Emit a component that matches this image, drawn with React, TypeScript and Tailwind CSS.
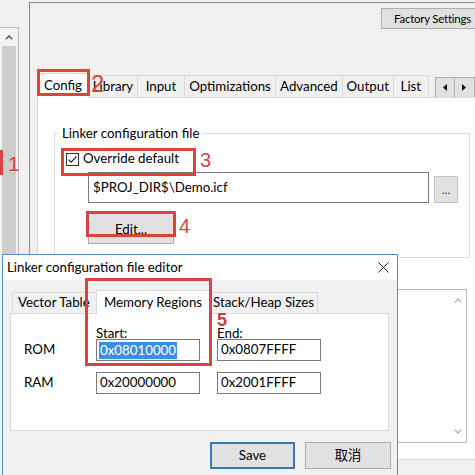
import React from "react";

const Chevron = ({ dir, color = "#606060" }: { dir: "up" | "down"; color?: string }) => (
  <svg width="8" height="5" viewBox="0 0 8 5">
    <path
      d={dir === "up" ? "M0.8 4.3 L4 1 L7.2 4.3" : "M0.8 0.7 L4 4 L7.2 0.7"}
      fill="none"
      stroke={color}
      strokeWidth="1.3"
    />
  </svg>
);

const Tri = ({ dir }: { dir: "left" | "right" }) => (
  <svg width="4" height="7" viewBox="0 0 4 7">
    <path d={dir === "left" ? "M4 0 L0 3.5 L4 7 Z" : "M0 0 L4 3.5 L0 7 Z"} fill="#111" />
  </svg>
);

export default function App() {
  const mainTabs: { label: string; w: string; sel?: boolean }[] = [
    { label: "Config", w: "w-[53px]", sel: true },
    { label: "Library", w: "w-[50px]" },
    { label: "Input", w: "w-[48px]" },
    { label: "Optimizations", w: "w-[93px]" },
    { label: "Advanced", w: "w-[68px]" },
    { label: "Output", w: "w-[52px]" },
    { label: "List", w: "w-[36px]" },
  ];

  return (
    <div className="relative w-[475px] h-[475px] overflow-hidden bg-[#f0f0f0] text-black font-['Lato','Noto_Sans_CJK_SC',sans-serif] text-[13.3px]">
      <div className="flex h-full">
        {/* left strip */}
        <div className="w-[19px] pt-[27px] flex flex-col shrink-0">
          <div className="flex-1 border-t border-r border-[#bdbdbd] flex flex-col bg-[#f3f3f3]">
            <div className="h-[18px] flex items-center justify-center">
              <Chevron dir="up" color="#505050" />
            </div>
            <div className="flex-1 mx-[2px] bg-[#cdcdcd]" />
          </div>
        </div>
        <div className="w-[10px] shrink-0" />
        {/* main window */}
        <div className="flex-1 mt-[2px] border-l border-t border-[#8a8a8a] flex flex-col min-w-0 overflow-hidden">
          <div className="h-[69px] flex justify-end items-start pt-[5px]">
            <div className="w-[100px] -mr-[6px] h-[21px] bg-[#e1e1e1] border border-[#adadad] text-[11.4px] leading-[19px] pl-[12px] whitespace-nowrap tracking-[-0.2px]">
              Factory Settings
            </div>
          </div>
          {/* tab row */}
          <div className="flex items-end pl-[7px] h-[25px]">
            {mainTabs.map((t) =>
              t.sel ? (
                <div
                  key={t.label}
                  className={`${t.w} h-[25px] bg-white border-l border-t border-r border-[#d9d9d9] -mb-[1px] relative z-10 flex items-center justify-center`}
                >
                  {t.label}
                </div>
              ) : (
                <div
                  key={t.label}
                  className={`${t.w} h-[22px] bg-[#f0f0f0] border-t border-r border-[#d9d9d9] flex items-center justify-center`}
                >
                  {t.label}
                </div>
              )
            )}
            <div className="flex ml-[6px] mb-[-1px]">
              <div className="w-[20px] h-[21px] bg-[#e1e1e1] border border-[#adadad] flex items-center justify-center">
                <Tri dir="left" />
              </div>
              <div className="w-[20px] h-[21px] bg-[#e1e1e1] border border-[#adadad] border-l-0 flex items-center justify-center">
                <Tri dir="right" />
              </div>
            </div>
          </div>
          {/* tab panel */}
          <div className="ml-[7px] h-[363px] bg-white border-l border-t border-b border-[#d9d9d9] pl-[16px] pt-[27px] flex flex-col">
            <fieldset className="w-[413px] h-[133px] border border-[#dcdcdc] px-[11px] pb-0 pt-0">
              <legend className="ml-[-7px] px-[3px] leading-[17px]">Linker configuration file</legend>
              <div className="flex items-center h-[16px] mt-[9px]">
                <svg width="13" height="13" viewBox="0 0 13 13" className="shrink-0">
                  <rect x="0.5" y="0.5" width="12" height="12" fill="#fff" stroke="#333" />
                  <path d="M2.6 6.6 L5.2 9.2 L10.4 3.4" fill="none" stroke="#222" strokeWidth="1.2" />
                </svg>
                <span className="ml-[4px]">Override default</span>
              </div>
              <div className="flex items-start mt-[5px] ml-[22px]">
                <div className="w-[341px] h-[31px] border border-[#7a7a7a] flex items-center pl-[4px]">
                  $PROJ_DIR$\Demo.icf
                </div>
                <div className="ml-[5px] mt-[4px] w-[24px] h-[27px] bg-[#e1e1e1] border border-[#c4c4c4] flex items-center justify-center text-[12px] text-[#333]">
                  ...
                </div>
              </div>
              <div className="ml-[22px] mt-[10px] w-[86px] h-[31px] bg-[#e1e1e1] border border-[#adadad] flex items-center justify-center pt-[3px]">
                Edit...
              </div>
            </fieldset>
            <div className="mt-[31px] w-[413px] h-[154px] border border-[#bcbcbc] flex justify-end">
              <div className="w-[17px] flex flex-col items-center justify-between py-[8px]">
                <Chevron dir="up" color="#b0b0b0" />
                <Chevron dir="down" color="#b0b0b0" />
              </div>
            </div>
          </div>
        </div>
      </div>

      {/* dialog window */}
      <div className="absolute left-[2px] top-[254px] w-[396px] h-[240px] border border-[#5a8dbb] bg-[#f0f0f0] flex flex-col z-20">
        <div className="h-[25px] bg-white flex items-center justify-between pl-[4px] pr-[8px] shrink-0">
          <span className="text-[13.3px]">Linker configuration file editor</span>
          <svg width="11" height="11" viewBox="0 0 11 11">
            <path d="M0.5 0.5 L10.5 10.5 M10.5 0.5 L0.5 10.5" stroke="#222" strokeWidth="1" />
          </svg>
        </div>
        <div className="px-[7px] pt-[9px] flex flex-col">
          <div className="flex items-end h-[24px] pl-[2px]">
            <div className="w-[84px] h-[21px] border-t border-l border-[#d9d9d9] flex items-center pl-[5px] whitespace-nowrap">
              Vector Table
            </div>
            <div className="w-[114px] h-[24px] bg-white border-t border-l border-r border-[#d9d9d9] -mb-[1px] relative z-10 flex items-center justify-center whitespace-nowrap">
              Memory Regions
            </div>
            <div className="w-[108px] h-[21px] border-t border-r border-[#d9d9d9] flex items-center justify-center whitespace-nowrap">
              Stack/Heap Sizes
            </div>
          </div>
          <div className="w-[379px] h-[118px] bg-white border border-[#d9d9d9] pl-[13px] pt-[14px]">
            <div className="flex h-[11px] leading-[11px]">
              <div className="w-[72px]" />
              <div className="w-[121px]">Start:</div>
              <div>End:</div>
            </div>
            <div className="flex items-center h-[22px]">
              <div className="w-[72px]">ROM</div>
              <div className="w-[104px] h-[22px] border border-[#7a7a7a] flex items-center pl-[2px]">
                <span className="bg-[#3b8fe3] text-white leading-[17px] px-[1px]">0x08010000</span>
              </div>
              <div className="w-[104px] h-[22px] ml-[17px] border border-[#7a7a7a] flex items-center pl-[3px]">
                0x0807FFFF
              </div>
            </div>
            <div className="flex items-center h-[22px] mt-[11px]">
              <div className="w-[72px]">RAM</div>
              <div className="w-[104px] h-[22px] border border-[#7a7a7a] flex items-center pl-[3px]">
                0x20000000
              </div>
              <div className="w-[104px] h-[22px] ml-[17px] border border-[#7a7a7a] flex items-center pl-[3px]">
                0x2001FFFF
              </div>
            </div>
          </div>
          <div className="flex justify-end mt-[11px] gap-[10px] -mr-[1px]">
            <div className="w-[85px] h-[27px] bg-[#e1e1e1] border-2 border-[#3b78ad] flex items-center justify-center">
              Save
            </div>
            <div className="w-[86px] h-[27px] bg-[#e1e1e1] border border-[#adadad] flex items-center justify-center">
              取消
            </div>
          </div>
        </div>
      </div>

      {/* annotations */}
      <div className="absolute left-0 top-[150px] w-[3px] h-[25px] bg-[#d9443f] z-30" />
      <div className="absolute left-[8px] top-[153px] text-[21px] leading-none text-[#d9443f] font-['Liberation_Sans',sans-serif] z-30">1</div>

      <div className="absolute left-[37px] top-[69px] w-[53px] h-[27px] border-[3px] border-[#d9443f] z-30" />
      <div className="absolute left-[91px] top-[72px] text-[24px] leading-none text-[#d9443f] font-['Liberation_Sans',sans-serif] z-30">2</div>

      <div className="absolute left-[61px] top-[148px] w-[135px] h-[28px] border-[3px] border-[#d9443f] z-30" />
      <div className="absolute left-[200px] top-[150px] text-[20px] leading-none text-[#d9443f] font-['Liberation_Sans',sans-serif] z-30">3</div>

      <div className="absolute left-[86px] top-[211px] w-[90px] h-[26px] border-[3px] border-[#d9443f] z-30" />
      <div className="absolute left-[179px] top-[216px] text-[20px] leading-none text-[#d9443f] font-['Liberation_Sans',sans-serif] z-30">4</div>

      <div className="absolute left-[85px] top-[278px] w-[127px] h-[88px] border-[3px] border-[#d9443f] z-30" />
      <div className="absolute left-[217px] top-[311px] text-[18px] leading-none font-bold text-[#c9403a] font-['Liberation_Sans',sans-serif] z-30">5</div>
    </div>
  );
}
